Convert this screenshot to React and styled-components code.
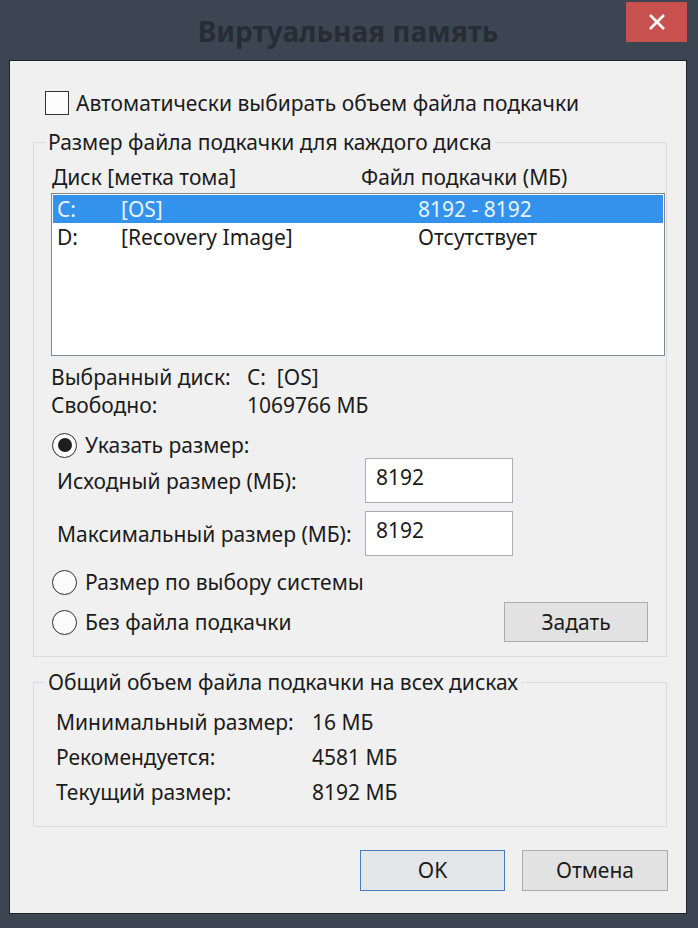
import React from "react";
import styled, { createGlobalStyle } from "styled-components";

const GlobalStyle = createGlobalStyle`
  html, body {
    margin: 0;
    padding: 0;
    background: #3c4652;
  }
  body {
    font-family: "Noto Sans", "Liberation Sans", sans-serif;
    color: #1b1b1b;
  }
`;

const Frame = styled.div`
  width: 698px;
  height: 928px;
  background: #3c4652;
`;

const TitleBar = styled.div`
  height: 60px;
  display: grid;
  grid-template-columns: 1fr auto 1fr;
  align-items: start;
`;

const Title = styled.div`
  grid-column: 2;
  margin-top: 14px;
  font-size: 28px;
  line-height: 34px;
  font-weight: 700;
  color: #262d35;
  padding-right: 2px;
`;

const CloseButton = styled.div`
  grid-column: 3;
  justify-self: end;
  margin: 2px 11px 0 0;
  width: 61px;
  height: 40px;
  background: #c8514f;
  display: flex;
  align-items: center;
  justify-content: center;
`;

const Content = styled.div`
  margin-left: 9px;
  width: 678px;
  height: 854px;
  box-sizing: border-box;
  border: 1px solid #1d2329;
  background: #f0f0f0;
  font-size: 21px;
  line-height: 24px;
`;

const CheckRow = styled.label`
  display: flex;
  align-items: center;
  gap: 7px;
  margin: 30px 0 0 35px;
  height: 24px;
`;

const CheckBox = styled.span`
  width: 24px;
  height: 24px;
  box-sizing: border-box;
  border: 1px solid #333;
  background: #fdfdfd;
`;

const Group = styled.fieldset`
  margin: ${(p) => p.$top}px 0 0 23px;
  width: 634px;
  height: ${(p) => p.$height}px;
  box-sizing: border-box;
  border: 1px solid #d9dde0;
  padding: 0;
  min-width: 0;
`;

const Legend = styled.legend`
  margin-left: 11px;
  padding: 0 3px;
  line-height: 24px;
`;

const Headers = styled.div`
  display: grid;
  grid-template-columns: 309px 1fr;
  margin: 11px 0 0 18px;
  height: 24px;
`;

const ListBox = styled.div`
  margin: 4px 0 0 17px;
  width: 614px;
  height: 163px;
  box-sizing: border-box;
  border: 1px solid #828790;
  background: #fff;
  padding: 1px;
`;

const ListRow = styled.div`
  display: grid;
  grid-template-columns: 64px 297px 1fr;
  height: 28px;
  align-items: center;
  padding-left: 4px;
  background: ${(p) => (p.$selected ? "#3393ec" : "transparent")};
  color: ${(p) => (p.$selected ? "#e9f3fd" : "#1b1b1b")};
`;

const InfoGrid = styled.div`
  display: grid;
  grid-template-columns: 196px 1fr;
  grid-auto-rows: 28px;
  align-items: center;
  margin: 7px 0 0 17px;
`;

const RadioRow = styled.label`
  display: flex;
  align-items: center;
  gap: 8px;
  height: 24px;
  margin: ${(p) => p.$top || 0}px 0 0 18px;
`;

const Radio = styled.span`
  width: 25px;
  height: 25px;
  box-sizing: border-box;
  border-radius: 50%;
  border: 1.5px solid #2d2d2d;
  background: #fbfbfb;
  display: flex;
  align-items: center;
  justify-content: center;
  &::after {
    content: "";
    width: 14px;
    height: 14px;
    border-radius: 50%;
    background: #1e1e1e;
    display: ${(p) => (p.$checked ? "block" : "none")};
  }
`;

const SizeRow = styled.div`
  display: grid;
  grid-template-columns: 308px 148px;
  align-items: center;
  margin: ${(p) => p.$top}px 0 0 23px;
`;

const SizeInput = styled.div`
  height: 45px;
  box-sizing: border-box;
  border: 1px solid #abadb3;
  background: #fff;
  padding: 6px 10px;
`;

const BottomRow = styled.div`
  display: flex;
  align-items: center;
  justify-content: space-between;
  margin: 8px 18px 0 0;
  height: 40px;
`;

const Button = styled.div`
  width: ${(p) => p.$width}px;
  height: ${(p) => p.$height}px;
  box-sizing: border-box;
  border: 1px solid ${(p) => (p.$default ? "#3d7fc0" : "#acacac")};
  background: ${(p) => (p.$default ? "#e4e6e9" : "#e2e2e2")};
  display: flex;
  align-items: center;
  justify-content: center;
  padding-bottom: 1px;
`;

const StatsGrid = styled.div`
  display: grid;
  grid-template-columns: 256px 1fr;
  grid-auto-rows: 35px;
  align-items: center;
  margin: 10px 0 0 22px;
`;

const Footer = styled.div`
  display: flex;
  justify-content: flex-end;
  gap: 17px;
  margin: 23px 18px 0 0;
`;

export default function App() {
  return (
    <Frame>
      <GlobalStyle />
      <TitleBar>
        <Title>Виртуальная память</Title>
        <CloseButton>
          <svg width="18" height="18" viewBox="0 0 18 18">
            <path d="M2 2 L16 16 M16 2 L2 16" stroke="#fff" strokeWidth="2.6" />
          </svg>
        </CloseButton>
      </TitleBar>
      <Content>
        <CheckRow>
          <CheckBox />
          Автоматически выбирать объем файла подкачки
        </CheckRow>

        <Group $top={15} $height={527}>
          <Legend>Размер файла подкачки для каждого диска</Legend>
          <Headers>
            <span>Диск [метка тома]</span>
            <span>Файл подкачки (МБ)</span>
          </Headers>
          <ListBox>
            <ListRow $selected>
              <span>C:</span>
              <span>[OS]</span>
              <span>8192 - 8192</span>
            </ListRow>
            <ListRow>
              <span>D:</span>
              <span>[Recovery Image]</span>
              <span>Отсутствует</span>
            </ListRow>
          </ListBox>
          <InfoGrid>
            <span>Выбранный диск:</span>
            <span>C:&nbsp;&nbsp;[OS]</span>
            <span>Свободно:</span>
            <span>1069766 МБ</span>
          </InfoGrid>
          <RadioRow $top={14}>
            <Radio $checked />
            Указать размер:
          </RadioRow>
          <SizeRow $top={1}>
            <span>Исходный размер (МБ):</span>
            <SizeInput>8192</SizeInput>
          </SizeRow>
          <SizeRow $top={8}>
            <span>Максимальный размер (МБ):</span>
            <SizeInput>8192</SizeInput>
          </SizeRow>
          <RadioRow $top={14}>
            <Radio />
            Размер по выбору системы
          </RadioRow>
          <BottomRow>
            <RadioRow>
              <Radio />
              Без файла подкачки
            </RadioRow>
            <Button $width={144} $height={40}>
              Задать
            </Button>
          </BottomRow>
        </Group>

        <Group $top={13} $height={157}>
          <Legend>Общий объем файла подкачки на всех дисках</Legend>
          <StatsGrid>
            <span>Минимальный размер:</span>
            <span>16 МБ</span>
            <span>Рекомендуется:</span>
            <span>4581 МБ</span>
            <span>Текущий размер:</span>
            <span>8192 МБ</span>
          </StatsGrid>
        </Group>

        <Footer>
          <Button $default $width={145} $height={41}>
            OK
          </Button>
          <Button $width={146} $height={41}>
            Отмена
          </Button>
        </Footer>
      </Content>
    </Frame>
  );
}
